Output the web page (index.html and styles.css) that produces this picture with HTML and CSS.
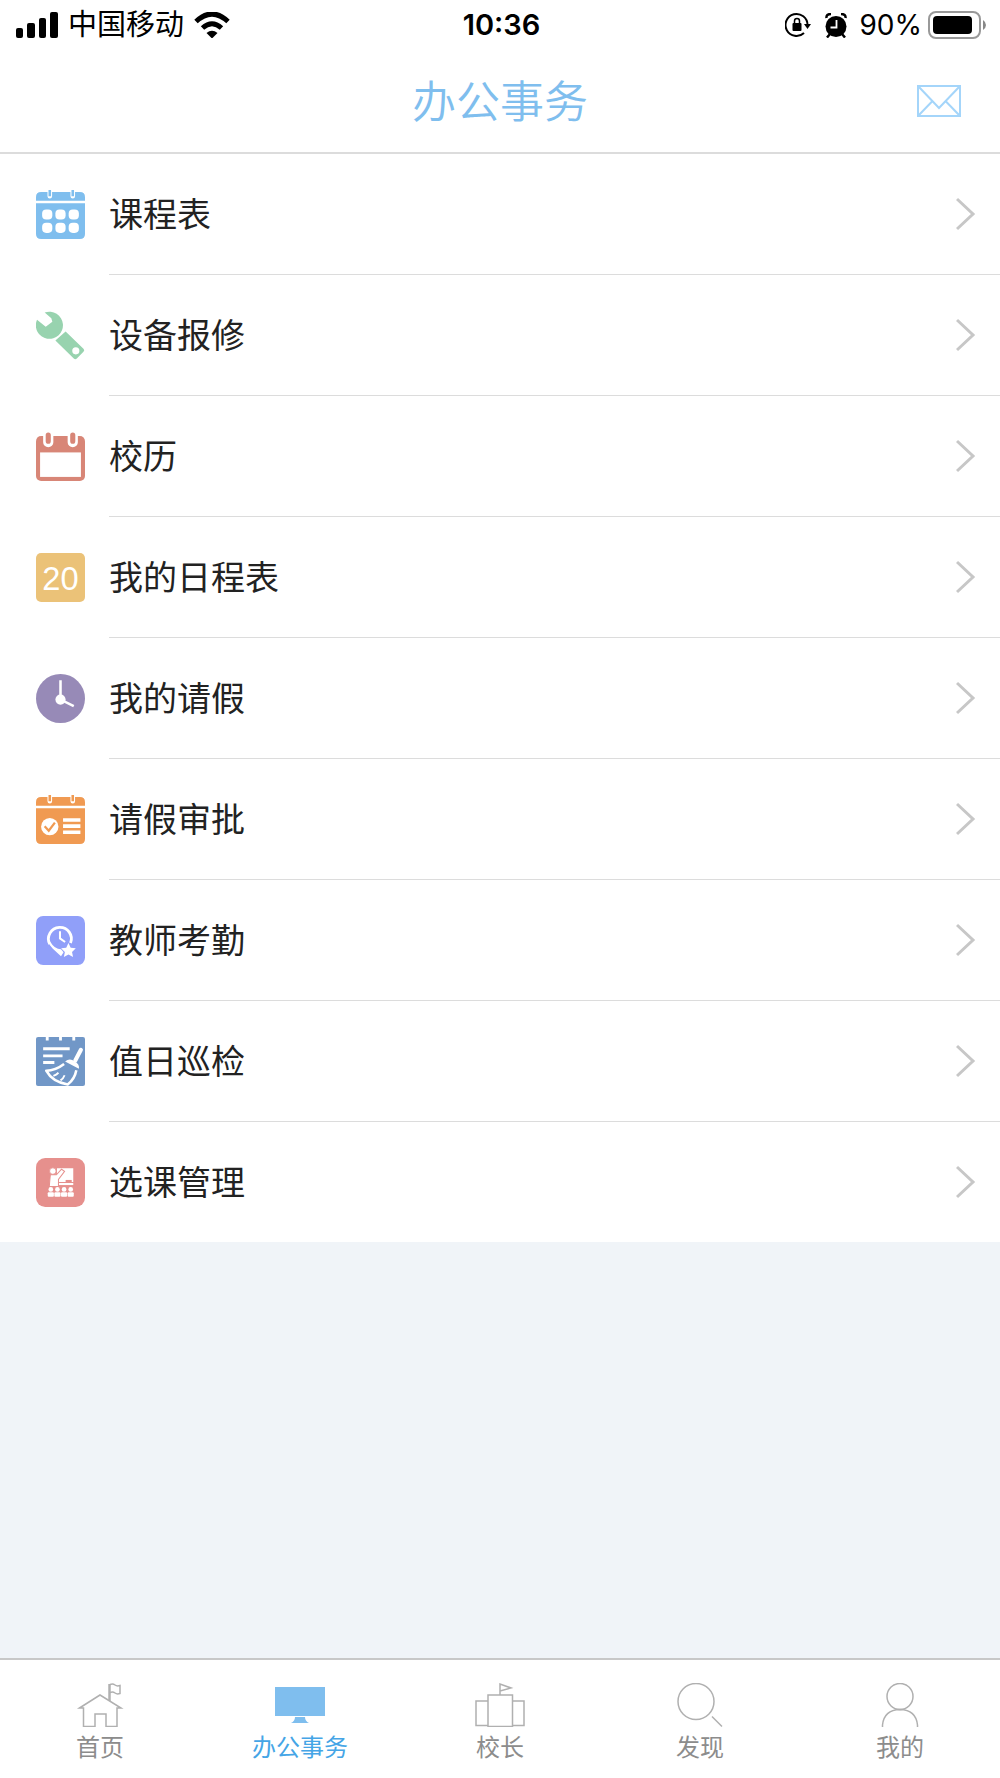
FILE: index.html
```html
<!DOCTYPE html>
<html lang="zh-CN">
	<head>
		<meta charset="UTF-8">
		<meta name="viewport" content="width=device-width, initial-scale=1">
		<title>办公事务</title>
		<link rel="stylesheet" href="styles.css">
	</head>
	<body>
		<!-- 状态栏 -->
		<div class="status">
			<div class="status-left">
				<svg width="42" height="26" viewBox="0 0 42 26">
					<rect x="0" y="16" width="7" height="10" rx="2"/>
					<rect x="11" y="11" width="8" height="15" rx="2"/>
					<rect x="23" y="6" width="7" height="20" rx="2"/>
					<rect x="34" y="0" width="8" height="26" rx="2"/>
				</svg>
				<span>中国移动</span>
				<svg width="36" height="26" viewBox="0 0 36 26">
					<path d="M2 9.500Q18-5.500 34 9.500" fill="none" stroke="#000" stroke-width="5"/>
					<path d="M8.500 16Q18 7.500 27.500 16" fill="none" stroke="#000" stroke-width="5"/>
					<path d="M12.500 21Q18 16.500 23.500 21L18 26.500z"/>
				</svg>
			</div>
			<div class="status-time">10:36</div>
			<div class="status-right">
				<svg class="lock" width="26" height="26" viewBox="0 0 26 26">
					<path d="M22.500 13A11 11 0 1 0 19 21" fill="none" stroke="#000" stroke-width="2"/>
					<path d="M19 12h7l-3.500 5z"/>
					<rect x="7.500" y="11" width="9" height="8" rx="1"/>
					<path d="M9.500 12V9a2.500 2.500 0 0 1 5 0v3" fill="none" stroke="#000" stroke-width="1.500"/>
				</svg>
				<svg class="alarm" width="22" height="25" viewBox="0 0 22 25">
					<circle cx="11" cy="13.500" r="10.500"/>
					<path d="M1.500 5Q1 1 6 1M20.500 5Q21 1 16 1" fill="none" stroke="#000" stroke-width="2.500"/>
					<path d="M5 21l-3 3.500M17 21l3 3.500" stroke="#000" stroke-width="2.500"/>
					<path d="M11.500 7v7.500H5.500" fill="none" stroke="#fff" stroke-width="1.800"/>
				</svg>
				<span>90%</span>
				<svg class="battery" width="59" height="28" viewBox="0 0 59 28">
					<rect x="1" y="1" width="51" height="26" rx="7" fill="none" stroke="#999" stroke-width="2"/>
					<rect x="5" y="5" width="39" height="18" rx="4"/>
					<path d="M55 9q3 2 3 5t-3 5z" fill="#888"/>
				</svg>
			</div>
		</div>
		<!-- 标题 -->
		<header class="header">
			<h1>办公事务</h1>
			<button class="mail" type="button" aria-label="消息">
				<svg width="44" height="32" viewBox="0 0 44 32" fill="none" stroke="#a4d5fa" stroke-width="2">
					<rect x="1" y="1" width="42" height="30"/>
					<path d="M1 1l21 22L43 1M1 31l14.500-15M43 31L28.500 16"/>
				</svg>
			</button>
		</header>
		<!-- 功能列表 -->
		<main>
			<ul class="list">
				<li>
					<a href="#">
						<svg class="icon" viewBox="0 0 48 48">
							<path d="M5 2h38q5 0 5 5v3.500H0V7q0-5 5-5zM0 13h48v30q0 5-5 5H5q-5 0-5-5z" fill="#7fbeee"/>
							<path d="M13.500 0v6M36 0v6" stroke="#fff" stroke-width="4.500" stroke-linecap="round"/>
							<path d="M13.500 0v6M36 0v6" stroke="#7fbeee" stroke-width="2.500"/>
							<g fill="#fff">
								<rect x="6" y="19" width="10" height="10" rx="4"/>
								<rect x="19" y="19" width="10" height="10" rx="4"/>
								<rect x="32" y="19" width="10" height="10" rx="4"/>
								<rect x="6" y="32" width="10" height="10" rx="4"/>
								<rect x="19" y="32" width="10" height="10" rx="4"/>
								<rect x="32" y="32" width="10" height="10" rx="4"/>
							</g>
						</svg>
						<span>课程表</span>
						<svg class="arrow" viewBox="0 0 20 34"><path d="M1 2l16 15L1 32"/></svg>
					</a>
				</li>
				<li>
					<a href="#">
						<svg class="icon" viewBox="0 0 48 48" fill="#98d3af">
							<path d="M8.500 1.500A13.300 13.300 0 1 1 1 8.500L9.500 15.500 16 10.500 15 7z"/>
							<path d="M29 20L46.500 37q1.500 1.500 0 3L40 46.500q-1.500 1.500-3 0L19 29z"/>
							<circle cx="39" cy="39" r="3.500" fill="#fff"/>
						</svg>
						<span>设备报修</span>
						<svg class="arrow" viewBox="0 0 20 34"><path d="M1 2l16 15L1 32"/></svg>
					</a>
				</li>
				<li>
					<a href="#">
						<svg class="icon" viewBox="0 0 48 48">
							<rect x="0" y="4" width="48" height="44" rx="5" fill="#d88677"/>
							<rect x="4" y="20" width="40" height="24" fill="#fff"/>
							<path d="M12 2v8M36 2v8" stroke="#fff" stroke-width="10" stroke-linecap="round"/>
							<path d="M12 3v6M36 3v6" stroke="#d88677" stroke-width="5" stroke-linecap="round"/>
						</svg>
						<span>校历</span>
						<svg class="arrow" viewBox="0 0 20 34"><path d="M1 2l16 15L1 32"/></svg>
					</a>
				</li>
				<li>
					<a href="#">
						<svg class="icon" viewBox="0 0 48 48">
							<rect width="48" height="48" rx="5" fill="#ebc278"/>
							<text class="icon-num" x="24" y="36" text-anchor="middle">20</text>
						</svg>
						<span>我的日程表</span>
						<svg class="arrow" viewBox="0 0 20 34"><path d="M1 2l16 15L1 32"/></svg>
					</a>
				</li>
				<li>
					<a href="#">
						<svg class="icon" viewBox="0 0 48 48">
							<circle cx="24" cy="24" r="24" fill="#978ab7"/>
							<circle cx="24" cy="25" r="5" fill="#fff"/>
							<path d="M24 6v19l13 6.500" fill="none" stroke="#fff" stroke-width="2.500"/>
						</svg>
						<span>我的请假</span>
						<svg class="arrow" viewBox="0 0 20 34"><path d="M1 2l16 15L1 32"/></svg>
					</a>
				</li>
				<li>
					<a href="#">
						<svg class="icon" viewBox="0 0 48 48">
							<path d="M5 2h38q5 0 5 5v3.500H0V7q0-5 5-5zM0 13h48v30q0 5-5 5H5q-5 0-5-5z" fill="#f09a52"/>
							<path d="M13.500 0v6M36 0v6" stroke="#fff" stroke-width="4.500" stroke-linecap="round"/>
							<path d="M13.500 0v6M36 0v6" stroke="#f09a52" stroke-width="2.500"/>
							<circle cx="13.500" cy="31" r="8.500" fill="#fff"/>
							<path d="M8.500 30.500l4 4.500 6-8" fill="none" stroke="#f09a52" stroke-width="2.200"/>
							<path d="M26.500 24.500h17M26.500 30.500h17M26.500 36.500h17" stroke="#fff" stroke-width="3.500"/>
						</svg>
						<span>请假审批</span>
						<svg class="arrow" viewBox="0 0 20 34"><path d="M1 2l16 15L1 32"/></svg>
					</a>
				</li>
				<li>
					<a href="#">
						<svg class="icon" viewBox="0 0 48 48">
							<rect width="48" height="48" rx="7" fill="#909ff9"/>
							<path d="M33.800 26.500A11.200 11.200 0 1 0 13.500 27.500" fill="none" stroke="#fff" stroke-width="2.800"/>
							<path d="M12 25Q13 29 16.500 32L24.500 39.500 27 35.500 24.500 32.500Q18 32.500 14.500 26z" fill="#fff"/>
							<path d="M23.500 15v7l5 3.500" fill="none" stroke="#fff" stroke-width="2"/>
							<path d="M31.800 26.500l2.200 4.600 5 .6-3.700 3.500 1 5-4.500-2.500-4.500 2.500 1-5-3.700-3.500 5-.6z" fill="#fff"/>
						</svg>
						<span>教师考勤</span>
						<svg class="arrow" viewBox="0 0 20 34"><path d="M1 2l16 15L1 32"/></svg>
					</a>
				</li>
				<li>
					<a href="#">
						<svg class="icon" viewBox="0 0 48 48">
							<rect width="48" height="48" rx="2" fill="#7197c7"/>
							<path d="M11 0v3.500M24 0v3.500M37 0v3.500" stroke="#fff" stroke-width="2.800"/>
							<path d="M7 11.500h26M7 18.500h19M7 25h11" stroke="#fff" stroke-width="2.800"/>
							<path d="M44 12.500L38.500 23" stroke="#fff" stroke-width="4" stroke-linecap="round"/>
							<path d="M28.500 24Q33 20 38 24 43 27 42 31z" fill="#fff"/>
							<path d="M27.500 26.500Q19 33 10 33 16 44 31 46.500 38 41 39.500 32.500" fill="none" stroke="#fff" stroke-width="2.500" stroke-linejoin="round"/>
							<path d="M17 38q3-1 5-3M24 42.500q3-2 4-5" fill="none" stroke="#fff" stroke-width="1.800"/>
						</svg>
						<span>值日巡检</span>
						<svg class="arrow" viewBox="0 0 20 34"><path d="M1 2l16 15L1 32"/></svg>
					</a>
				</li>
				<li>
					<a href="#">
						<svg class="icon" viewBox="0 0 48 48">
							<rect width="48" height="48" rx="9" fill="#e6908d"/>
							<g fill="#fff">
								<path d="M18.500 10H36.500V23.500H20.500V10z"/>
								<path d="M21.500 24.500H36.500V26.500H21.500z"/>
							</g>
							<path d="M14 16.500h6l5-5.500 3 2-6 8V28H13z" fill="#fff" stroke="#e6908d" stroke-width="1"/>
							<circle cx="16.500" cy="12.800" r="3.200" fill="#fff" stroke="#e6908d" stroke-width=".8"/>
							<path d="M29 21.500h6v2h-6z" fill="#e6908d"/>
							<g fill="#fff">
								<circle cx="14.500" cy="30.800" r="2.300"/>
								<circle cx="21" cy="30.800" r="2.300"/>
								<circle cx="27.500" cy="30.800" r="2.300"/>
								<circle cx="34" cy="30.800" r="2.300"/>
								<rect x="11.500" y="33.500" width="6" height="4.500" rx="1"/>
								<rect x="18" y="33.500" width="6" height="4.500" rx="1"/>
								<rect x="24.500" y="33.500" width="6" height="4.500" rx="1"/>
								<rect x="31" y="33.500" width="6" height="4.500" rx="1"/>
							</g>
						</svg>
						<span>选课管理</span>
						<svg class="arrow" viewBox="0 0 20 34"><path d="M1 2l16 15L1 32"/></svg>
					</a>
				</li>
			</ul>
		</main>
		<!-- 底部导航 -->
		<nav class="tabs">
			<a href="#">
				<svg viewBox="0 0 50 44">
					<path d="M4.500 25L25 12 46 25H42V43.500H31V31H20V43.500H8.500V25z"/>
					<path d="M34.500 18V1" stroke-width="2.500"/>
					<path d="M35 1.500q3-1 5 .5t5 .5v8q-3 1-5-.5t-5-.5"/>
				</svg>
				<span>首页</span>
			</a>
			<a href="#" class="ac">
				<svg viewBox="0 0 50 44">
					<path d="M0 4h50v29H0zM20 34h10q0 4 4 6H16q4-2 4-6z" fill="#7fbeee" stroke="none"/>
				</svg>
				<span>办公事务</span>
			</a>
			<a href="#">
				<svg viewBox="0 0 50 44">
					<path d="M13 12H37.500V43.500H13zM13 18H1V42.500H13M37.500 18H49V42.500H37.500M25 12V1L36 5 25 8"/>
				</svg>
				<span>校长</span>
			</a>
			<a href="#">
				<svg viewBox="0 0 50 44">
					<circle cx="21" cy="18.500" r="18"/>
					<path d="M37 33.500L47 43.500"/>
				</svg>
				<span>发现</span>
			</a>
			<a href="#">
				<svg viewBox="0 0 50 44">
					<circle cx="25" cy="13.500" r="13"/>
					<path d="M7.500 44V42Q9 27 25 26.500 41 27 42.500 42V44"/>
				</svg>
				<span>我的</span>
			</a>
		</nav>
	</body>
</html>
```
FILE: styles.css
```css
*{
	margin: 0;
	padding: 0;
	box-sizing: border-box;
}
body{
	min-height: 100vh;
	display: flex;
	flex-direction: column;
	background: #f0f4f8;
	font-family: "Inter", "Noto Sans CJK SC", sans-serif;
	color: #222;
}
svg{
	display: block;
	flex: none;
}
li{
	list-style: none;
}
a{
	color: inherit;
	text-decoration: none;
}
/* 状态栏 */
.status{
	height: 50px;
	padding: 0 13px 0 16px;
	display: grid;
	grid-template-columns: 1fr auto 1fr;
	align-items: center;
	background: #fff;
	color: #000;
	font-size: 29px;
	line-height: 50px;
}
.status-left,
.status-right{
	display: flex;
	align-items: center;
}
.status-left{
	gap: 10px;
}
.status-right{
	justify-content: flex-end;
	font-size: 28px;
}
.status-time{
	font-size: 29px;
	font-weight: 600;
}
.alarm{
	margin: 0 12px 0 14px;
}
.battery{
	margin-left: 6px;
}
/* 标题 */
.header{
	height: 104px;
	display: grid;
	grid-template-columns: 1fr auto 1fr;
	align-items: center;
	padding: 0 39px;
	background: #fff;
	border-bottom: 2px solid #dcdcdc;
}
.header h1{
	grid-column: 2;
	padding-top: 2px;
	font-size: 44px;
	line-height: 64px;
	font-weight: 350;
	color: #7fbeee;
}
.mail{
	justify-self: end;
	border: none;
	background: none;
	cursor: pointer;
}
/* 功能列表 */
main{
	flex: 1;
}
.list{
	background: #fff;
}
.list a{
	display: flex;
	align-items: center;
	padding-left: 36px;
}
.list span{
	flex: 1;
	padding-top: 2px;
	font-size: 34px;
	line-height: 118px;
}
.icon{
	width: 49px;
	height: 49px;
	margin-right: 24px;
}
.icon-num{
	font-family: "Liberation Sans", sans-serif;
	font-size: 32px;
	fill: #fff;
}
.arrow{
	width: 20px;
	height: 34px;
	margin-right: 24px;
	fill: none;
	stroke: #c7c7c7;
	stroke-width: 3;
}
/* 分割线从文字左侧开始 */
.list li + li::before{
	content: "";
	display: block;
	height: 1px;
	margin-left: 109px;
	background: #dcdcdc;
}
/* 底部导航 */
.tabs{
	display: flex;
	height: 120px;
	background: #fff;
	border-top: 2px solid #c8c8c8;
}
.tabs a{
	flex: 1;
	display: flex;
	flex-direction: column;
	align-items: center;
	padding-top: 23px;
	color: #8c8c8c;
}
.tabs svg{
	width: 50px;
	height: 44px;
	fill: none;
	stroke: #b0b0b0;
	stroke-width: 1.5;
}
.tabs span{
	font-size: 24px;
	line-height: 42px;
	font-weight: 400;
}
.tabs .ac{
	color: #45a5e6;
}
```
